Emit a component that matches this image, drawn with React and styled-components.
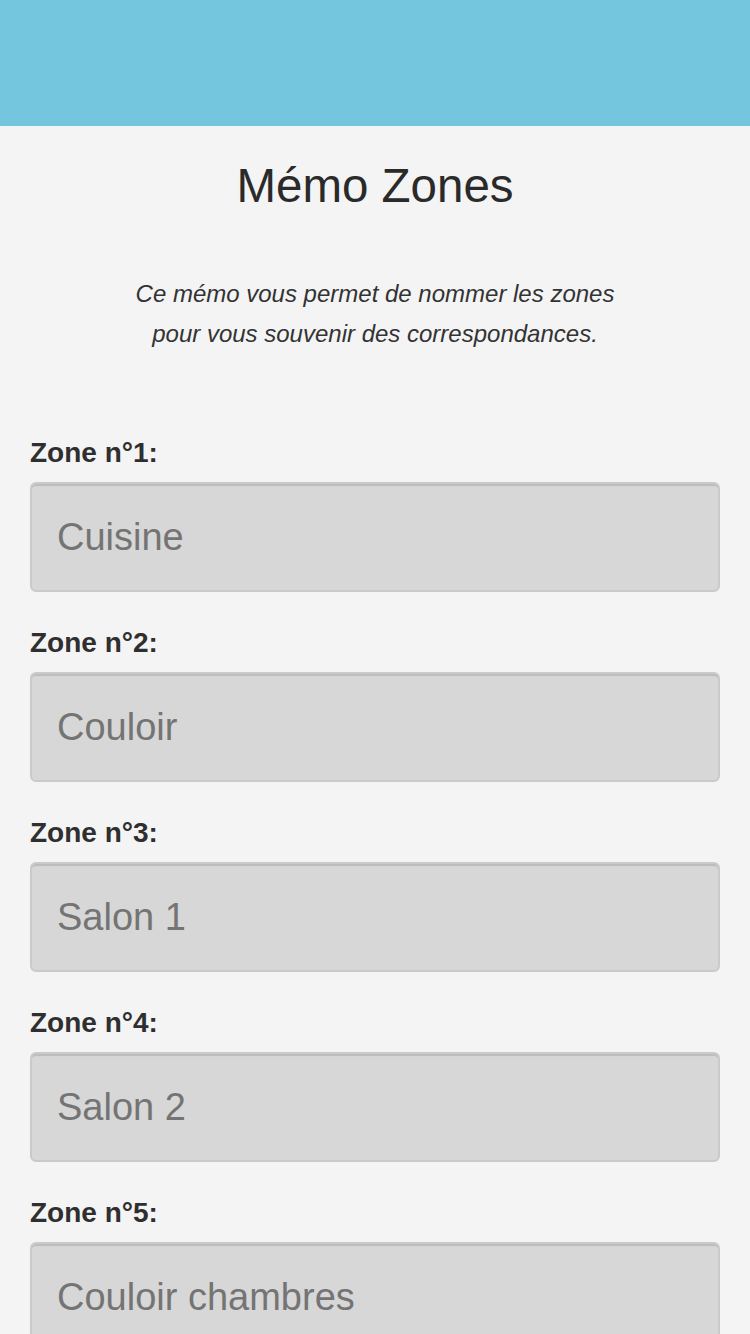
import React from "react";
import styled, { createGlobalStyle } from "styled-components";

const Global = createGlobalStyle`
  html, body { margin: 0; padding: 0; background: #f4f4f4; }
  body { font-family: "Liberation Sans", Arial, sans-serif; color: #333; }
  * { box-sizing: border-box; }
`;

const Page = styled.div`
  min-height: 1334px;
  background: #f4f4f4;
`;

const Header = styled.header`
  height: 126px;
  background: #74c6de;
`;

const Content = styled.main`
  padding: 30px 30px 0;
  display: flex;
  flex-direction: column;
`;

const Title = styled.h1`
  margin: 0;
  font-size: 47.5px;
  line-height: 60px;
  font-weight: 400;
  color: #2a2a2a;
  text-align: center;
`;

const Intro = styled.p`
  margin: 58px 0 0;
  font-size: 24px;
  line-height: 40px;
  font-style: italic;
  color: #333;
  text-align: center;
`;

const Form = styled.form`
  margin-top: 81px;
  display: flex;
  flex-direction: column;
  gap: 33px;
`;

const Field = styled.div`
  display: flex;
  flex-direction: column;
  gap: 11px;
`;

const Label = styled.label`
  font-size: 28px;
  line-height: 36px;
  font-weight: 700;
  color: #2f2f2f;
`;

const Input = styled.input`
  width: 100%;
  height: 110px;
  margin: 0;
  padding: 0 25px;
  border: 2px solid #cacaca;
  border-radius: 6px;
  background: #d7d7d7;
  box-shadow: inset 0 3px 1px -1px #bcbcbc;
  font-family: "Liberation Sans", Arial, sans-serif;
  font-size: 38px;
  color: #737373;
  outline: none;
  &::placeholder { color: #747474; opacity: 1; }
`;

const zones = ["Cuisine", "Couloir", "Salon 1", "Salon 2", "Couloir chambres"];

export default function App() {
  return (
    <Page>
      <Global />
      <Header />
      <Content>
        <Title>Mémo Zones</Title>
        <Intro>
          Ce mémo vous permet de nommer les zones
          <br />
          pour vous souvenir des correspondances.
        </Intro>
        <Form onSubmit={(e) => e.preventDefault()}>
          {zones.map((z, i) => (
            <Field key={i}>
              <Label htmlFor={`zone${i + 1}`}>Zone n°{i + 1}:</Label>
              <Input id={`zone${i + 1}`} type="text" placeholder={z} />
            </Field>
          ))}
        </Form>
      </Content>
    </Page>
  );
}
